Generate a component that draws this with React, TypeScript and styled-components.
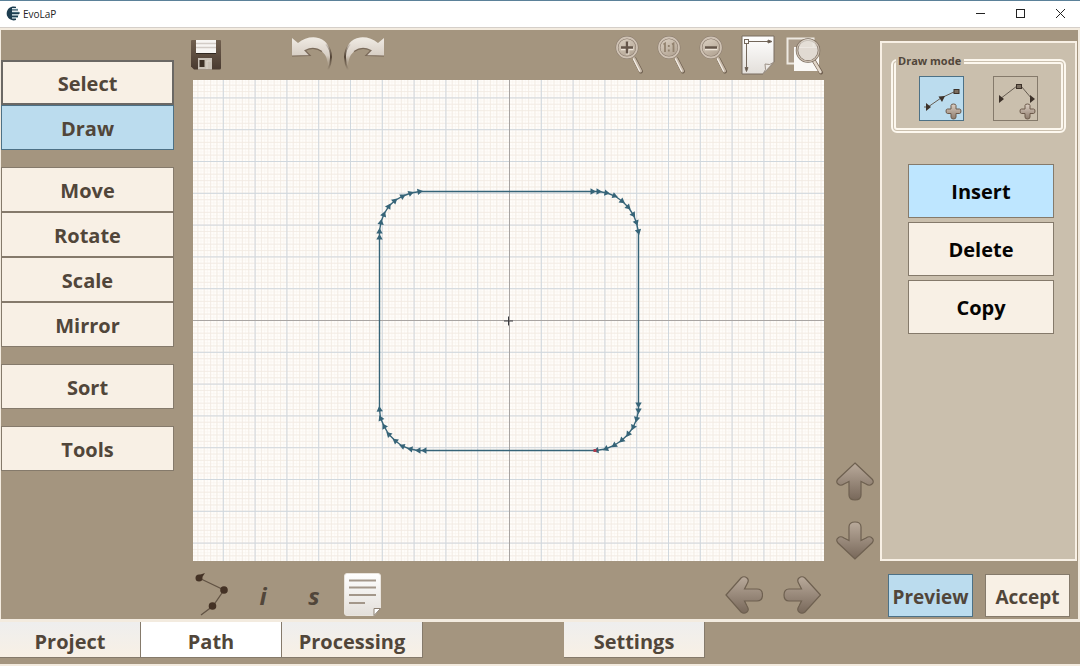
import React from "react";
import styled, { createGlobalStyle, css } from "styled-components";

const color = {
  taupe: "#a4957f",
  panel: "#cabfad",
  cream: "#f8f0e5",
  edge: "#f3ebdf",
  blue: "#bbdcee",
  insert: "#bee6ff",
  blueEdge: "#4d7186",
  line: "#857a6b",
  ink: "#51463a",
  trace: "#366478",
};

const GlobalStyle = createGlobalStyle`
  *, *::before, *::after { box-sizing: border-box; }
  body {
    margin: 0;
    background: ${color.edge};
    color: ${color.ink};
    font-family: "Open Sans", "Noto Sans", sans-serif;
  }
  button { font-family: inherit; color: inherit; margin: 0; cursor: pointer; }
`;

const Window = styled.div`
  display: flex;
  flex-direction: column;
  min-height: 100vh;
  padding-bottom: 2px;
`;

const TitleBar = styled.header`
  display: flex;
  align-items: center;
  height: 28px;
  padding: 0 0 1px 5px;
  background: #fff;
  border-top: 1px solid #5b8199;
  border-bottom: 1px solid #d5cfc9;
`;

const AppName = styled.h1`
  flex: 1;
  margin: 0 0 0 3px;
  color: #222;
  font-size: 10px;
  font-weight: 400;
  line-height: 16px;
`;

const WindowButton = styled.button`
  display: flex;
  align-items: center;
  justify-content: center;
  width: 40px;
  height: 24px;
  padding: 0;
  border: 0;
  background: none;
`;

const Main = styled.main`
  display: flex;
  flex: 1;
  margin: 2px 2px 0 1px;
  background: ${color.taupe};
`;

const SideNav = styled.nav`
  display: flex;
  flex-direction: column;
  gap: 17px;
  flex: none;
  width: 173px;
  padding-top: 30px;
`;

const NavGroup = styled.div`
  display: flex;
  flex-direction: column;
`;

const activeLook = css`
  background: ${color.blue};
  border-color: ${color.blueEdge};
`;

const NavButton = styled.button<{ $active?: boolean; $focused?: boolean }>`
  height: 45px;
  padding: 2px 0 0;
  border: 1px solid ${color.line};
  background: ${color.cream};
  font-size: 20px;
  font-weight: 700;
  line-height: 28px;
  ${(p) => p.$active && activeLook}
  ${(p) => p.$focused && css`border: 2px solid #6b6864;`}
`;

const Workspace = styled.section`
  display: flex;
  flex: 1;
  flex-direction: column;
  min-width: 0;
`;

const ToolBar = styled.div`
  display: flex;
  align-items: center;
  justify-content: space-between;
  height: 50px;
  margin: 0 56px 0 17px;
`;

const StatusBar = styled(ToolBar)`
  height: 58px;
  padding-top: 8px;
`;

const ToolGroup = styled.div<{ $gap?: number }>`
  display: flex;
  align-items: center;
  gap: ${(p) => p.$gap ?? 10}px;
`;

const IconButton = styled.button<{ $width?: number }>`
  display: flex;
  align-items: center;
  justify-content: center;
  width: ${(p) => p.$width ?? 40}px;
  height: 42px;
  padding: 0;
  border: 0;
  background: none;
`;

const LetterButton = styled(IconButton)`
  padding: 3px 0 0 2px;
  font-size: 24px;
  font-style: italic;
  font-weight: 700;
  line-height: 32px;
`;

const SaveSlot = styled.div`
  margin-right: 60px;
`;

const PanGroup = styled(ToolGroup)`
  margin-right: 3px;
  padding-top: 2px;
`;

const Middle = styled.div`
  display: flex;
  flex: 1;
  min-height: 400px;
`;

const CanvasFrame = styled.div`
  flex: 1;
  contain: size;
  margin-left: 19px;
  background: #fffdfa;
  overflow: hidden;

  svg { display: block; width: 100%; height: 100%; }
`;

const Rail = styled.div`
  display: flex;
  flex-direction: column;
  align-items: center;
  justify-content: flex-end;
  gap: 17px;
  flex: none;
  width: 56px;
  padding: 0 0 0 5px;
`;

const Inspector = styled.aside`
  display: flex;
  flex-direction: column;
  flex: none;
  width: 198px;
  padding: 11px 1px 0 0;
`;

const InspectorPanel = styled.div`
  display: flex;
  flex: 1;
  flex-direction: column;
  padding: 10px 9px;
  border: 2px solid ${color.cream};
  background: ${color.panel};
`;

const ModeSet = styled.fieldset`
  display: flex;
  justify-content: center;
  gap: 29px;
  min-width: 0;
  margin: 0;
  padding: 7px 0;
  border: 5px double #fdf8ef;
  border-radius: 6px;
`;

const ModeTitle = styled.legend`
  padding: 0 3px 0 2px;
  font-size: 11px;
  font-weight: 700;
  line-height: 16px;
`;

const ModeButton = styled.button<{ $active?: boolean }>`
  width: 45px;
  height: 45px;
  padding: 0;
  border: 1px solid ${color.line};
  background: none;
  ${(p) => p.$active && activeLook}

  svg { display: block; }
`;

const ActionList = styled.div`
  display: flex;
  flex-direction: column;
  gap: 4px;
  margin: 31px 12px 0 17px;
`;

const ActionButton = styled.button<{ $active?: boolean }>`
  height: 54px;
  padding: 2px 0 0;
  border: 1px solid ${color.line};
  background: ${(p) => (p.$active ? color.insert : color.cream)};
  color: #050403;
  font-size: 20px;
  font-weight: 700;
  line-height: 28px;
`;

const Confirm = styled.div`
  display: flex;
  gap: 12px;
  height: 58px;
  padding: 13px 7px 2px 8px;
`;

const ConfirmButton = styled(NavButton)`
  flex: 1;
  height: 43px;
  font-size: 19px;
`;

const TabBar = styled.nav`
  display: flex;
  height: 42px;
  margin-top: 3px;
  background: ${color.taupe};
`;

const Tab = styled.button<{ $active?: boolean; $apart?: boolean }>`
  width: 141px;
  height: 36px;
  margin-left: ${(p) => (p.$apart ? 141 : 0)}px;
  padding: 4px 0 0;
  border: 0;
  border-right: 1px solid ${color.line};
  border-bottom: 1px solid ${color.line};
  background: ${(p) => (p.$active ? "#fff" : "linear-gradient(#eeeeee, #f8f0e5)")};
  font-size: 20px;
  font-weight: 700;
  line-height: 28px;
`;

const HiddenDefs = styled.svg`
  position: absolute;
`;

const Gradients = () => (
  <HiddenDefs width="0" height="0" aria-hidden="true">
    <defs>
      <linearGradient id="arrowFill" x1="0" y1="0" x2="0" y2="1">
        <stop offset="0" stopColor="#b9aa9b" />
        <stop offset="1" stopColor="#78685a" />
      </linearGradient>
      <linearGradient id="undoFill" x1="0" y1="0" x2="0" y2="1">
        <stop offset="0" stopColor="#f0ebe4" />
        <stop offset="0.55" stopColor="#d8cfc5" />
        <stop offset="1" stopColor="#a4957f" stopOpacity="0" />
      </linearGradient>
      <linearGradient id="undoEdge" x1="0" y1="0" x2="0" y2="1">
        <stop offset="0" stopColor="#4a3b2d" stopOpacity="0.1" />
        <stop offset="0.5" stopColor="#4a3b2d" />
        <stop offset="1" stopColor="#4a3b2d" stopOpacity="0" />
      </linearGradient>
      <linearGradient id="lens" x1="0" y1="0" x2="0.6" y2="1">
        <stop offset="0" stopColor="#ded3c5" />
        <stop offset="1" stopColor="#b3a594" />
      </linearGradient>
      <linearGradient id="paper" x1="0" y1="0" x2="0" y2="1">
        <stop offset="0" stopColor="#ffffff" />
        <stop offset="1" stopColor="#e3dfda" />
      </linearGradient>
      <linearGradient id="floppy" x1="0" y1="0" x2="0" y2="1">
        <stop offset="0" stopColor="#71604f" />
        <stop offset="1" stopColor="#493a30" />
      </linearGradient>
      <linearGradient id="plus" x1="0" y1="0" x2="0" y2="1">
        <stop offset="0" stopColor="#ddd0c4" />
        <stop offset="1" stopColor="#8c7a6b" />
      </linearGradient>
    </defs>
  </HiddenDefs>
);

const Logo = () => (
  <svg width="15" height="15" viewBox="0 0 15 15" aria-hidden="true">
    <path d="M11 .8A7 7 0 1 0 11 14V12.5H7V11H13V9.5H7V8H14.5V6H7V4.5H13V3.2H7V2H11Z" fill="#1d3d50" />
    <path d="M7 3.2h6M7 6.2h7M7 8.8h7M7 11.5h6" stroke="#7098a6" strokeWidth=".7" />
  </svg>
);

const SaveIcon = () => (
  <svg width="30" height="30" viewBox="0 0 30 30">
    <path d="M1 0H29Q30 0 30 1V28Q30 29.5 28.5 29.5H3L0 26.5V1Q0 0 1 0Z" fill="url(#floppy)" />
    <rect x="5" y="0" width="20" height="14" fill="#f7f5f2" />
    <path d="M5 3.5H25M5 7.5H25" stroke="#d2ccc6" strokeWidth="1.5" />
    <path d="M5 13.5H25" stroke="#302720" />
    <rect x="7" y="18" width="14" height="11.5" fill="#c9c1b7" />
    <rect x="8.5" y="20" width="5" height="7" fill="#3c3027" />
    <path d="M16 29V21H20" fill="none" stroke="#ece7df" opacity=".5" />
  </svg>
);

const TurnIcon = ({ redo }: { redo?: boolean }) => (
  <svg width="42" height="36" viewBox="0 0 42 36">
    <g transform={redo ? "translate(42 0) scale(-1 1)" : undefined}>
      <path
        d="M1 1L7 6Q15-.5 25 .5Q39 2.5 40 20Q40 27 37 33Q37.500 20 31.500 15Q24 8.500 14 13.500L19 18.500L1 19Z"
        fill="url(#undoFill)"
      />
      <path d="M35 7Q40 12 40 20Q40 27 37 33" fill="none" stroke="url(#undoEdge)" strokeWidth="1.800" />
      <path d="M1 19L19 18.500L14 13.500Q23 9 31 14.500" fill="none" stroke="#665444" strokeWidth="1.200" opacity=".75" />
    </g>
  </svg>
);

const Handle = () => (
  <g strokeLinecap="round">
    <path d="M20.500 24L27 36.500" stroke="#6f6050" strokeWidth="4" />
    <path d="M20 23.500L26.500 36" stroke="#c8baaa" strokeWidth="3" />
    <path d="M19.500 24L25.500 36" stroke="#f6f0e8" strokeWidth="1.200" />
  </g>
);

const ZoomIcon = ({ kind }: { kind: "in" | "one" | "out" }) => (
  <svg width="32" height="40" viewBox="0 0 32 40">
    <Handle />
    <circle cx="13" cy="12.500" r="10" fill="url(#lens)" stroke="#85766a" strokeWidth="2.800" />
    <circle cx="13" cy="12.500" r="10" fill="none" stroke="#cfc2b3" strokeWidth="1.800" />
    {kind === "one" ? (
      <g fill="none" strokeWidth="1.800" stroke="#93836f">
        <path d="M7.500 9.500L9 8.500V17M16 9.500L17.500 8.500V17" />
        <path d="M12.800 10V12M12.800 14.500V16.500" />
      </g>
    ) : (
      <g fill="none">
        <path d={kind === "in" ? "M7 13.500H19.500M13.500 7V19.500" : "M7 13.500H19.500"} stroke="#efe5d9" strokeWidth="3.500" />
        <path d={kind === "in" ? "M7 12.500H19M13 6.500V18.500" : "M7 12.500H19"} stroke="#65564a" strokeWidth="2.500" />
      </g>
    )}
  </svg>
);

const PageIcon = () => (
  <svg width="34" height="40" viewBox="0 0 34 40">
    <path d="M1 1H33V27L22 39H1Z" fill="url(#paper)" stroke="#796d60" />
    <path d="M22 39Q26 35 24 29Q29 31 33 27Z" fill="#eeeae5" stroke="#9c9186" />
    <g fill="none" stroke="#73675b">
      <rect x="3.500" y="4.500" width="4" height="4" />
      <path d="M8 6.500H30M5.500 9V36" />
      <path d="M27 5L31 6.500L27 8ZM4 32.500L5.500 36.500L7 32.500Z" fill="#5f5347" />
    </g>
  </svg>
);

const FindIcon = () => (
  <svg width="38" height="40" viewBox="0 0 38 40">
    <rect x="1.500" y="3.500" width="26" height="25" fill="#a99a88" stroke="#eee9e1" strokeWidth="2" />
    <rect x="8" y="12" width="25" height="24" fill="#faf8f5" />
    <path d="M28 26L35 37.500" stroke="#705f50" strokeWidth="4" strokeLinecap="round" />
    <path d="M28 26L34.500 37" stroke="#e3d8ca" strokeWidth="2.500" strokeLinecap="round" />
    <circle cx="22" cy="15.500" r="11" fill="#d8d0c6" fillOpacity=".75" stroke="#76685a" strokeWidth="2.500" />
    <circle cx="22" cy="15.500" r="11" fill="none" stroke="#c9bcae" strokeWidth="1.200" />
    <path d="M13 13A9 9 0 0 1 31 13Z" fill="#f4f0eb" opacity=".6" />
  </svg>
);

const ArrowIcon = ({ dir }: { dir: "up" | "down" | "left" | "right" }) => {
  const shape = {
    up: "M19 1L36 17Q38.500 20 36 22Q33.500 24.500 30 22L25 19.500V33Q25 38 19 38Q13 38 13 33V19.500L8 22Q4.500 24.500 2 22Q-.5 20 2 17Z",
    down: "M19 38L2 22Q-.5 19 2 17Q4.500 14.500 8 17L13 19.500V6Q13 1 19 1Q25 1 25 6V19.500L30 17Q33.500 14.500 36 17Q38.500 19 36 22Z",
    left: "M1 19L16 2Q19-.5 22 2Q24.500 4 22 8L19.500 13H32Q37.500 13 37.500 19Q37.500 25 32 25H19.500L22 30Q24.500 34 22 36Q19 38.500 16 36Z",
    right: "M37.500 19L22 2Q19-.5 16 2Q13.500 4 16 8L18.500 13H6Q1 13 1 19Q1 25 6 25H18.500L16 30Q13.500 34 16 36Q19 38.500 22 36Z",
  }[dir];
  return (
    <svg width="38" height="39" viewBox="0 0 38 39">
      <path d={shape} fill="url(#arrowFill)" stroke="#6e6050" strokeWidth="1.200" />
    </svg>
  );
};

const PolylineIcon = () => (
  <svg width="36" height="44" viewBox="0 0 36 44">
    <path d="M6 6L31 18L20 34L8 43" fill="none" stroke="#625344" strokeWidth="1.300" />
    <g fill="#443225">
      <circle cx="6" cy="6" r="3.500" />
      <path d="M6 3L12 1L8 7Z" />
      <circle cx="31" cy="18" r="3.800" />
      <circle cx="19.500" cy="34" r="3.800" />
    </g>
  </svg>
);

const NoteIcon = () => (
  <svg width="37" height="43" viewBox="0 0 37 43">
    <path d="M3 .5H34Q36.500.5 36.500 3V35L30 42.500H3Q.5 42.500.5 40V3Q.5.5 3 .5Z" fill="url(#paper)" stroke="#e9e4dd" />
    <path d="M30 42.500V35.500H36.500Z" fill="#fff" stroke="#8c8073" />
    <path d="M5 7.500H32M5 14.500H32M5 22H32M5 30H21" stroke="#a3978a" strokeWidth="1.800" />
  </svg>
);

const PlusBadge = () => (
  <path
    d="M31 28.500Q31 27 33.500 27Q36 27 36 28.500V32H39.500Q41 32 41 34Q41 36.500 39.500 36.500H36V40Q36 42 33.500 42Q31 42 31 40V36.500H27.500Q26 36.500 26 34Q26 32 27.500 32H31Z"
    fill="url(#plus)"
    stroke="#6c5a4b"
  />
);

const ModeIcon = ({ kind }: { kind: "append" | "between" }) => (
  <svg width="43" height="43" viewBox="0 0 43 43">
    {kind === "append" ? (
      <>
        <path d="M4 30H8L21 21L36 14" fill="none" stroke="#665c51" />
        <path d="M6 26L11 30L6 34ZM18.500 19.500L25 19L22 25Z" fill="#3c3129" />
        <rect x="34" y="12.500" width="5" height="4" fill="#7b6e60" stroke="#3c3129" />
      </>
    ) : (
      <>
        <path d="M6 22L23 9H27L38 22" fill="none" stroke="#665c51" />
        <path d="M5 18L10 22L5 26ZM36 18L41 22L36 26Z" fill="#3c3129" />
        <rect x="22.500" y="7.500" width="5" height="4" fill="#7b6e60" stroke="#3c3129" />
      </>
    )}
    <PlusBadge />
  </svg>
);

const WIDTH = 631;
const HEIGHT = 481;
const ORIGIN = { x: 316.5, y: 240.5 };
const STEP = 31.8;

/* Vertices of the rounded square, in cutting order. */
const vertices: [number, number][] = [
  [186.5, 157], [186.5, 151], [188, 142], [191, 134], [196, 126], [202, 120.5], [210, 116], [218, 113], [227, 111.5],
  [400, 111.5], [406, 111.5], [414, 113], [422, 116], [429.5, 121.5], [435.5, 127.5], [440.5, 135], [443.5, 143], [445.5, 152],
  [445.5, 325], [445.5, 331], [443.5, 339.5], [440, 347.5], [435, 354.5], [428.5, 360.5], [421, 365.5], [412.5, 369], [403, 370.5],
  [231, 370.5], [225, 370.5], [217, 369], [209, 366], [202, 360.5], [195.5, 354], [191, 346], [187.5, 338], [186.5, 329],
];

const gridLines = (origin: number, size: number, step: number) => {
  const lines: number[] = [];
  for (let i = Math.ceil(-origin / step); origin + i * step <= size; i++) {
    if (i !== 0) lines.push(origin + i * step);
  }
  return lines;
};

const gridPath = (step: number) =>
  gridLines(ORIGIN.x, WIDTH, step).map((x) => `M${x} 0V${HEIGHT}`).join("") +
  gridLines(ORIGIN.y, HEIGHT, step).map((y) => `M0 ${y}H${WIDTH}`).join("");

const Drawing = () => (
  <svg viewBox={`0 0 ${WIDTH} ${HEIGHT}`} preserveAspectRatio="xMidYMid slice" role="img" aria-label="Tool path">
    <path d={gridPath(STEP / 5)} stroke="#efe5da" strokeWidth=".8" opacity=".7" />
    <path d={gridPath(STEP / 10)} stroke="#f3ebe2" strokeWidth=".5" opacity=".5" />
    <path d={gridPath(STEP)} stroke="#c5d1dc" strokeWidth="1" opacity=".75" />
    <path d={`M${ORIGIN.x} 0V${HEIGHT}M0 ${ORIGIN.y}H${WIDTH}`} stroke="#a9a5a3" />
    <path d="M311 241H320M315.500 236.500V245.500" stroke="#38383c" />
    <polygon points={vertices.map((v) => v.join(",")).join(" ")} fill="none" stroke={color.trace} strokeWidth="1.400" />
    {vertices.map(([x, y], i) => {
      const before = vertices[(i + vertices.length - 1) % vertices.length];
      const angle = (Math.atan2(y - before[1], x - before[0]) * 180) / Math.PI;
      return (
        <path
          key={i}
          d="M-2.500-3.200L3 0L-2.500 3.200Z"
          transform={`translate(${x} ${y}) rotate(${angle})`}
          fill={color.trace}
        />
      );
    })}
    <rect x="400.500" y="369" width="3" height="3" fill="#b0394a" />
  </svg>
);

const navGroups = [["Select", "Draw"], ["Move", "Rotate", "Scale", "Mirror"], ["Sort"], ["Tools"]];
const actions = ["Insert", "Delete", "Copy"];
const tabs = ["Project", "Path", "Processing", "Settings"];

export default function App() {
  return (
    <Window>
      <GlobalStyle />
      <Gradients />
      <TitleBar>
        <Logo />
        <AppName>EvoLaP</AppName>
        <WindowButton aria-label="Minimize">
          <svg width="11" height="11"><path d="M1 5.500H10" stroke="#222" /></svg>
        </WindowButton>
        <WindowButton aria-label="Maximize">
          <svg width="11" height="11"><rect x="1.500" y="1.500" width="8" height="8" fill="none" stroke="#222" /></svg>
        </WindowButton>
        <WindowButton aria-label="Close">
          <svg width="11" height="11"><path d="M1 1L10 10M10 1L1 10" stroke="#222" /></svg>
        </WindowButton>
      </TitleBar>

      <Main>
        <SideNav aria-label="Editing">
          {navGroups.map((group) => (
            <NavGroup key={group[0]}>
              {group.map((label) => (
                <NavButton key={label} $active={label === "Draw"} $focused={label === "Select"}>
                  {label}
                </NavButton>
              ))}
            </NavGroup>
          ))}
        </SideNav>

        <Workspace>
          <ToolBar>
            <ToolGroup>
              <SaveSlot>
                <IconButton $width={30} aria-label="Save"><SaveIcon /></IconButton>
              </SaveSlot>
              <IconButton $width={42} aria-label="Undo"><TurnIcon /></IconButton>
              <IconButton $width={42} aria-label="Redo"><TurnIcon redo /></IconButton>
            </ToolGroup>
            <ToolGroup>
              <IconButton $width={32} aria-label="Zoom in"><ZoomIcon kind="in" /></IconButton>
              <IconButton $width={32} aria-label="Actual size"><ZoomIcon kind="one" /></IconButton>
              <IconButton $width={32} aria-label="Zoom out"><ZoomIcon kind="out" /></IconButton>
              <IconButton $width={36} aria-label="Fit page"><PageIcon /></IconButton>
              <IconButton $width={38} aria-label="Fit drawing"><FindIcon /></IconButton>
            </ToolGroup>
          </ToolBar>
          <Middle>
            <CanvasFrame><Drawing /></CanvasFrame>
            <Rail>
              <IconButton aria-label="Pan up"><ArrowIcon dir="up" /></IconButton>
              <IconButton aria-label="Pan down"><ArrowIcon dir="down" /></IconButton>
            </Rail>
          </Middle>
          <StatusBar>
            <ToolGroup $gap={11}>
              <IconButton aria-label="Show points"><PolylineIcon /></IconButton>
              <LetterButton>i</LetterButton>
              <LetterButton>s</LetterButton>
              <IconButton $width={37} aria-label="Notes"><NoteIcon /></IconButton>
            </ToolGroup>
            <PanGroup $gap={20}>
              <IconButton $width={38} aria-label="Pan left"><ArrowIcon dir="left" /></IconButton>
              <IconButton $width={38} aria-label="Pan right"><ArrowIcon dir="right" /></IconButton>
            </PanGroup>
          </StatusBar>
        </Workspace>

        <Inspector>
          <InspectorPanel>
            <ModeSet>
              <ModeTitle>Draw mode</ModeTitle>
              <ModeButton $active aria-label="Append point"><ModeIcon kind="append" /></ModeButton>
              <ModeButton aria-label="Insert between points"><ModeIcon kind="between" /></ModeButton>
            </ModeSet>
            <ActionList>
              {actions.map((label) => (
                <ActionButton key={label} $active={label === "Insert"}>{label}</ActionButton>
              ))}
            </ActionList>
          </InspectorPanel>
          <Confirm>
            <ConfirmButton $active>Preview</ConfirmButton>
            <ConfirmButton>Accept</ConfirmButton>
          </Confirm>
        </Inspector>
      </Main>

      <TabBar aria-label="Pages">
        {tabs.map((label) => (
          <Tab key={label} $active={label === "Path"} $apart={label === "Settings"}>{label}</Tab>
        ))}
      </TabBar>
    </Window>
  );
}
